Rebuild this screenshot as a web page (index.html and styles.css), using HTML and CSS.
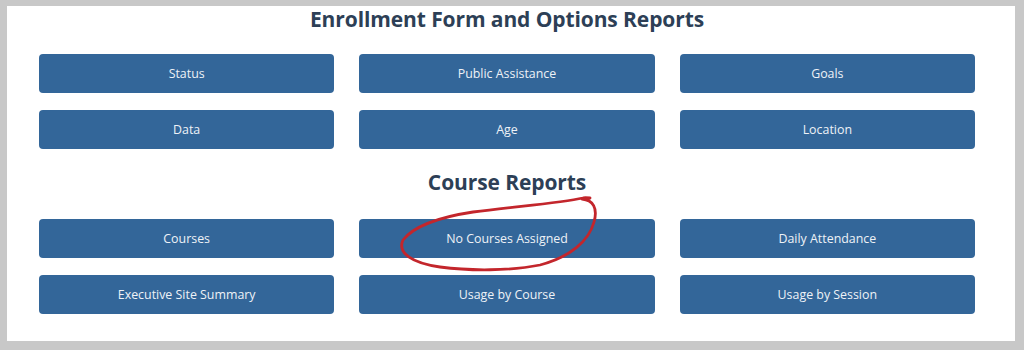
FILE: index.html
```html
<!DOCTYPE html>
<html lang="en">
<head>
    <meta charset="UTF-8">
    <meta name="viewport" content="width=device-width, initial-scale=1.0">
    <title>Reports</title>
    <link rel="stylesheet" href="styles.css">
</head>
<body>
    <main class="panel">
        <section class="report-group">
            <h2>Enrollment Form and Options Reports</h2>
            <div class="report-grid">
                <button type="button">Status</button>
                <button type="button">Public Assistance</button>
                <button type="button">Goals</button>
                <button type="button">Data</button>
                <button type="button">Age</button>
                <button type="button">Location</button>
            </div>
        </section>

        <section class="report-group">
            <h2>Course Reports</h2>
            <div class="report-grid">
                <button type="button">Courses</button>
                <button type="button">No Courses Assigned</button>
                <button type="button">Daily Attendance</button>
                <button type="button">Executive Site Summary</button>
                <button type="button">Usage by Course</button>
                <button type="button">Usage by Session</button>
            </div>
        </section>
    </main>

    <!-- red marker scribble around "No Courses Assigned" -->
    <svg class="scribble" width="1024" height="350" viewBox="0 0 1024 350">
        <path d="M590 198 C584 197, 583 198, 583 198 C560 203, 520 206, 473 212 C440 217, 414 226, 403 240 C397 253, 412 263, 440 267 C470 271, 510 271, 540 265 C570 257, 589 241, 594 222 C598 208, 593 200, 582 199"
              fill="none" stroke="#c3262c" stroke-width="2.8" stroke-linecap="round" stroke-linejoin="round"/>
    </svg>
</body>
</html>
```

FILE: styles.css
```css
body {
    margin: 0;
    padding: 0;
    background-color: #c8c8c8;
    font-family: 'Open Sans', 'Noto Sans', sans-serif;
    position: relative;
    height: 350px;
    overflow: hidden;
}

.panel {
    background-color: #fff;
    margin: 6px 9px 0 7px;
    padding: 0 40px 27px 32px;
}

.report-group + .report-group {
    margin-top: 20px;
}

.report-group h2 {
    margin: 0;
    text-align: center;
    font-size: 21px;
    letter-spacing: -0.1px;
    line-height: 26px;
    font-weight: 700;
    color: #2d3f56;
}

.report-grid {
    display: grid;
    grid-template-columns: repeat(3, 1fr);
    column-gap: 25px;
    row-gap: 17px;
    margin-top: 22px;
}

.report-group + .report-group .report-grid {
    margin-top: 24px;
}

.report-grid button {
    height: 39px;
    border: none;
    border-radius: 4px;
    background-color: #336699;
    color: #eef2f7;
    font-family: inherit;
    font-size: 12.4px;
    cursor: pointer;
}

.report-grid button:hover {
    background-color: #2d5a87;
}

.scribble {
    position: absolute;
    top: 0;
    left: 0;
    pointer-events: none;
}
```
